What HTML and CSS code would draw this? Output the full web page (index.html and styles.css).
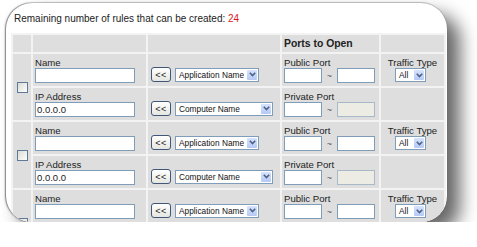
FILE: index.html
```html
<!DOCTYPE html>
<html>
<head>
<meta charset="utf-8">
<link rel="stylesheet" href="styles.css">
</head>
<body>
<div class="card">
  <div class="title">Remaining number of rules that can be created: <span class="count">24</span></div>
  <table class="rules">
    <colgroup>
      <col class="c1"><col class="c2"><col class="c3"><col class="c4"><col class="c5">
    </colgroup>
    <tr class="head">
      <th></th><th></th><th></th><th class="ports">Ports to Open</th><th></th>
    </tr>
    <!-- group 1 -->
    <tr>
      <td rowspan="2" class="chk"><input type="checkbox" class="cb"></td>
      <td class="field"><div class="lbl">Name</div><input class="txt w100" type="text" value=""></td>
      <td class="pick"><div class="pickrow"><button class="btn">&lt;&lt;</button><span class="sel w84"><span class="sel-text">Application Name</span><span class="sel-arrow"><svg width="7" height="5" viewBox="0 0 7 5"><path d="M0.8 0.8 L3.5 3.6 L6.2 0.8" fill="none" stroke="#4d6185" stroke-width="1.6"/></svg></span></span></div></td>
      <td class="field"><div class="lbl">Public Port</div><div class="ports-in"><input class="txt w38" type="text"><span class="tilde">~</span><input class="txt w38" type="text"></div></td>
      <td class="field center"><div class="lbl">Traffic Type</div><span class="sel w31 mid"><span class="sel-text">All</span><span class="sel-arrow"><svg width="7" height="5" viewBox="0 0 7 5"><path d="M0.8 0.8 L3.5 3.6 L6.2 0.8" fill="none" stroke="#4d6185" stroke-width="1.6"/></svg></span></span></td>
    </tr>
    <tr>
      <td class="field"><div class="lbl">IP Address</div><input class="txt w100" type="text" value="0.0.0.0"></td>
      <td class="pick"><div class="pickrow"><button class="btn">&lt;&lt;</button><span class="sel w98"><span class="sel-text">Computer Name</span><span class="sel-arrow"><svg width="7" height="5" viewBox="0 0 7 5"><path d="M0.8 0.8 L3.5 3.6 L6.2 0.8" fill="none" stroke="#4d6185" stroke-width="1.6"/></svg></span></span></div></td>
      <td class="field"><div class="lbl">Private Port</div><div class="ports-in"><input class="txt w38" type="text"><span class="tilde">~</span><input class="txt w38 dis" type="text" disabled></div></td>
      <td></td>
    </tr>
    <!-- group 2 -->
    <tr>
      <td rowspan="2" class="chk"><input type="checkbox" class="cb"></td>
      <td class="field"><div class="lbl">Name</div><input class="txt w100" type="text" value=""></td>
      <td class="pick"><div class="pickrow"><button class="btn">&lt;&lt;</button><span class="sel w84"><span class="sel-text">Application Name</span><span class="sel-arrow"><svg width="7" height="5" viewBox="0 0 7 5"><path d="M0.8 0.8 L3.5 3.6 L6.2 0.8" fill="none" stroke="#4d6185" stroke-width="1.6"/></svg></span></span></div></td>
      <td class="field"><div class="lbl">Public Port</div><div class="ports-in"><input class="txt w38" type="text"><span class="tilde">~</span><input class="txt w38" type="text"></div></td>
      <td class="field center"><div class="lbl">Traffic Type</div><span class="sel w31 mid"><span class="sel-text">All</span><span class="sel-arrow"><svg width="7" height="5" viewBox="0 0 7 5"><path d="M0.8 0.8 L3.5 3.6 L6.2 0.8" fill="none" stroke="#4d6185" stroke-width="1.6"/></svg></span></span></td>
    </tr>
    <tr>
      <td class="field"><div class="lbl">IP Address</div><input class="txt w100" type="text" value="0.0.0.0"></td>
      <td class="pick"><div class="pickrow"><button class="btn">&lt;&lt;</button><span class="sel w98"><span class="sel-text">Computer Name</span><span class="sel-arrow"><svg width="7" height="5" viewBox="0 0 7 5"><path d="M0.8 0.8 L3.5 3.6 L6.2 0.8" fill="none" stroke="#4d6185" stroke-width="1.6"/></svg></span></span></div></td>
      <td class="field"><div class="lbl">Private Port</div><div class="ports-in"><input class="txt w38" type="text"><span class="tilde">~</span><input class="txt w38 dis" type="text" disabled></div></td>
      <td></td>
    </tr>
    <!-- group 3 -->
    <tr>
      <td rowspan="2" class="chk"><input type="checkbox" class="cb"></td>
      <td class="field"><div class="lbl">Name</div><input class="txt w100" type="text" value=""></td>
      <td class="pick"><div class="pickrow"><button class="btn">&lt;&lt;</button><span class="sel w84"><span class="sel-text">Application Name</span><span class="sel-arrow"><svg width="7" height="5" viewBox="0 0 7 5"><path d="M0.8 0.8 L3.5 3.6 L6.2 0.8" fill="none" stroke="#4d6185" stroke-width="1.6"/></svg></span></span></div></td>
      <td class="field"><div class="lbl">Public Port</div><div class="ports-in"><input class="txt w38" type="text"><span class="tilde">~</span><input class="txt w38" type="text"></div></td>
      <td class="field center"><div class="lbl">Traffic Type</div><span class="sel w31 mid"><span class="sel-text">All</span><span class="sel-arrow"><svg width="7" height="5" viewBox="0 0 7 5"><path d="M0.8 0.8 L3.5 3.6 L6.2 0.8" fill="none" stroke="#4d6185" stroke-width="1.6"/></svg></span></span></td>
    </tr>
    <tr>
      <td class="field"></td>
      <td class="pick"></td>
      <td class="field"></td>
      <td></td>
    </tr>
  </table>
</div>
</body>
</html>
```

FILE: styles.css
```css
html, body {
  margin: 0;
  padding: 0;
  background: #fff;
}
body {
  font-family: "Liberation Sans", Arial, sans-serif;
  color: #111;
}
.card {
  margin: 3px 0 0 6px;
  width: 441px;
  height: 219px;
  border-radius: 26px;
  overflow: hidden;
  background: #fff;
  box-shadow: -1px 0 1.5px rgba(0,0,0,0.5), 0 -1px 1px rgba(0,0,0,0.15), 13px 11px 18px rgba(0,0,0,0.6);
}
.title {
  font-size: 10px;
  line-height: 12px;
  padding: 10px 0 0 8px;
  color: #222;
  white-space: nowrap;
}
.count {
  color: #e01818;
}
.rules {
  margin: 8px 0 0 5px;
  border-collapse: separate;
  border-spacing: 2px;
  background: #f3f3f3;
  table-layout: fixed;
  width: 435px;
  font-size: 10px;
  line-height: 10px;
}
.c1 { width: 18px; }
.c2 { width: 113px; }
.c3 { width: 132px; }
.c4 { width: 97px; }
.c5 { width: 63px; }
.rules th, .rules td {
  background: #dedede;
  padding: 0;
  vertical-align: top;
  text-align: left;
}
.head th {
  height: 17px;
  vertical-align: middle;
}
.ports {
  font-size: 10.4px;
  font-weight: bold;
  padding-left: 2px !important;
  color: #222;
  white-space: nowrap;
}
.rules td {
  height: 32px;
  box-sizing: border-box;
}
.field {
  padding: 4px 2px 3px 2px !important;
}
.center {
  text-align: center !important;
}
.lbl {
  font-size: 9.6px;
  line-height: 10px;
  height: 10px;
  white-space: nowrap;
  color: #222;
}
.txt {
  box-sizing: border-box;
  height: 15px;
  margin: 0;
  padding: 0 1px;
  border: 1px solid #7f9db9;
  background: #fff;
  font-family: "Liberation Sans", Arial, sans-serif;
  font-size: 9.5px;
  color: #222;
  display: block;
  outline: none;
}
.w100 { width: 100px; }
.w38 { width: 38px; }
.dis {
  background: #ecebe4;
  border-color: #a9b8c8;
}
.ports-in {
  display: flex;
  align-items: center;
  height: 15px;
}
.tilde {
  width: 15px;
  text-align: center;
  font-size: 9px;
  line-height: 9px;
  color: #555;
  padding-top: 2px;
}
.chk {
  vertical-align: middle !important;
  text-align: center !important;
}
.cb {
  appearance: none;
  -webkit-appearance: none;
  display: block;
  margin: 0 auto;
  width: 11px;
  height: 11px;
  box-sizing: border-box;
  border: 1px solid #5d7a99;
  background: linear-gradient(135deg, #dcdcd6, #fdfdfb);
}
.pick {
  padding: 13px 0 0 3px !important;
}
.pickrow {
  display: flex;
  align-items: center;
  height: 15px;
  gap: 4px;
}
.btn {
  box-sizing: border-box;
  width: 20px;
  height: 15px;
  margin: 0;
  padding: 0;
  border: 1px solid #40577a;
  border-radius: 3px;
  background: linear-gradient(#ffffff, #e6e6e0);
  font-family: "Liberation Sans", Arial, sans-serif;
  font-size: 9px;
  line-height: 12px;
  color: #222;
  letter-spacing: 0.5px;
}
.sel {
  box-sizing: border-box;
  display: inline-flex;
  align-items: stretch;
  height: 14px;
  border: 1px solid #7f9db9;
  background: #fff;
  padding: 1px;
  text-align: left;
  vertical-align: top;
}
.mid {
  display: flex;
  margin: 0 auto 0 12px;
}
.w84 { width: 84px; }
.w98 { width: 98px; }
.w31 { width: 31px; }
.sel-text {
  flex: 1;
  font-size: 8.3px;
  line-height: 10px;
  padding-left: 2px;
  color: #111;
  white-space: nowrap;
  overflow: hidden;
}
.sel-arrow {
  width: 10px;
  display: flex;
  align-items: center;
  justify-content: center;
  background: linear-gradient(#d6e3fd, #b5c9f6);
  border-radius: 1px;
}
.sel-arrow svg {
  display: block;
}
```
